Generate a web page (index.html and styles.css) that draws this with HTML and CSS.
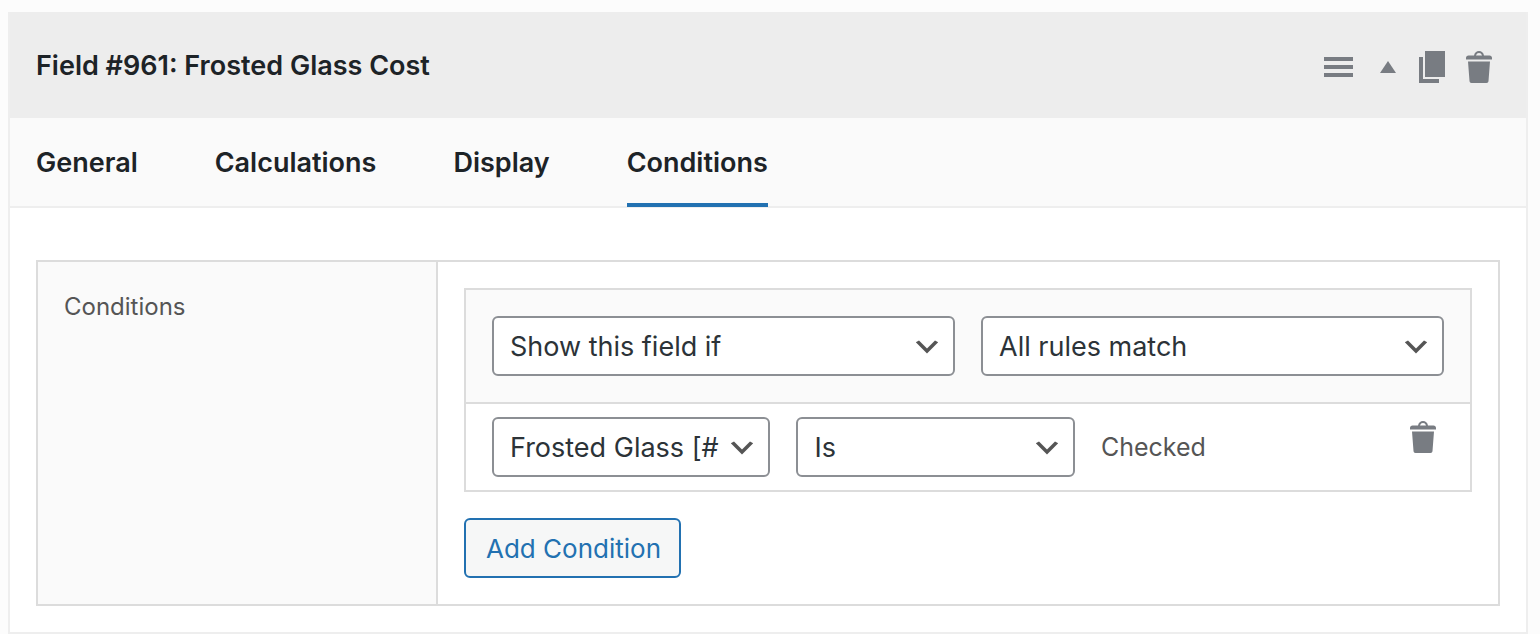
FILE: index.html
```
<!DOCTYPE html>
<html lang="en">

<head>
    <meta charset="UTF-8">
    <title>Field #961: Frosted Glass Cost</title>
    <link rel="stylesheet" href="styles.css">
</head>

<body>
    <div class="field">
        <div class="field-header">
            <h2 class="field-title">Field #961: Frosted Glass Cost</h2>
            <div class="field-actions">
                <button type="button" class="icon-btn" aria-label="Reorder">
                    <svg width="35" height="32" viewBox="0 0 35 32"><path d="M0 6h29v4H0zM0 14h29v4H0zM0 22h29v4H0z"/></svg>
                </button>
                <button type="button" class="icon-btn" aria-label="Collapse">
                    <svg width="16" height="32" viewBox="0 0 16 32"><path d="M8 10l8 12H0z"/></svg>
                </button>
                <button type="button" class="icon-btn" aria-label="Duplicate">
                    <svg width="28" height="32" viewBox="0 0 28 32"><path d="M8 0h20v26H8zM2 6h4v22h16v4H2z"/></svg>
                </button>
                <button type="button" class="icon-btn" aria-label="Delete field">
                    <svg width="26" height="32" viewBox="0 0 26 32"><path d="M8 4.500C8.500 1.500 10.500 0 13 0s4.500 1.500 5 4.500h5.500C25 4.500 26 5.500 26 7v1.500H0V7c0-1.500 1-2.500 2.500-2.500zM10 4.500h6C15.500 2.800 14.500 2 13 2s-2.500.8-3 2.500zM2 10.500h22l-1.500 19.500c-.1 1.300-.8 2-2 2h-15c-1.200 0-1.900-.7-2-2z"/></svg>
                </button>
            </div>
        </div>

        <nav class="tabs">
            <a href="#general" class="tab">General</a>
            <a href="#calculations" class="tab">Calculations</a>
            <a href="#display" class="tab">Display</a>
            <a href="#conditions" class="tab active">Conditions</a>
        </nav>

        <div class="field-body" id="conditions">
            <div class="setting">
                <div class="setting-label">Conditions</div>
                <div class="setting-content">
                    <div class="rules">
                        <div class="rules-header">
                            <select class="select" aria-label="Action">
                                <option>Show this field if</option>
                                <option>Hide this field if</option>
                            </select>
                            <select class="select" aria-label="Match">
                                <option>All rules match</option>
                                <option>Any rule matches</option>
                            </select>
                        </div>
                        <div class="rule">
                            <select class="select" aria-label="Field">
                                <option>Frosted Glass [#960]</option>
                            </select>
                            <select class="select" aria-label="Operator">
                                <option>Is</option>
                                <option>Is not</option>
                            </select>
                            <span class="rule-value">Checked</span>
                            <button type="button" class="icon-btn rule-delete" aria-label="Delete rule">
                                <svg width="26" height="32" viewBox="0 0 26 32"><path d="M8 4.500C8.500 1.500 10.500 0 13 0s4.500 1.500 5 4.500h5.500C25 4.500 26 5.500 26 7v1.500H0V7c0-1.500 1-2.500 2.500-2.500zM10 4.500h6C15.500 2.800 14.500 2 13 2s-2.500.8-3 2.500zM2 10.500h22l-1.500 19.500c-.1 1.300-.8 2-2 2h-15c-1.200 0-1.900-.7-2-2z"/></svg>
                            </button>
                        </div>
                    </div>
                    <button type="button" class="add-btn">Add Condition</button>
                </div>
            </div>
        </div>
    </div>
</body>

</html>
```
FILE: styles.css
```
* {
    box-sizing: border-box;
}

body {
    margin: 0;
    padding: 12px 12px 0 8px;
    background: #fcfcfc;
    font-family: Inter, "Liberation Sans", sans-serif;
    font-size: 26px;
    line-height: 36px;
    color: #1d2327;
}

.field {
    border: 2px solid #eee;
    border-top: 0;
    background: #fff;
}

.field-header {
    display: flex;
    justify-content: space-between;
    align-items: center;
    padding: 36px 34px 34px 26px;
    background: #ededed;
}

.field-title {
    margin: 0;
    font-size: 27px;
    font-weight: 600;
}

.field-actions {
    display: flex;
    align-items: center;
    gap: 21px;
}

.icon-btn {
    padding: 2px 0 0;
    border: 0;
    background: none;
    cursor: pointer;
}

.icon-btn svg {
    display: block;
    fill: #787c82;
}

.tabs {
    display: flex;
    gap: 77px;
    padding: 0 26px;
    border-bottom: 2px solid #eee;
    background: #fafafa;
}

.tab {
    margin-bottom: -1px;
    padding: 27px 0 22px;
    border-bottom: 4px solid transparent;
    font-size: 27px;
    font-weight: 600;
    color: #1d2327;
    text-decoration: none;
}

.tab.active {
    border-bottom-color: #2271b1;
}

.field-body {
    padding: 52px 26px 26px;
}

.setting {
    display: flex;
    border: 2px solid #dcdcdc;
}

.setting-label {
    flex: 0 0 400px;
    padding: 27px 26px;
    border-right: 2px solid #dcdcdc;
    background: #fafafa;
    font-size: 24px;
    color: #555;
}

.setting-content {
    flex: 1;
    min-width: 0;
    padding: 26px;
}

.rules {
    margin-bottom: 26px;
    border: 2px solid #dcdcdc;
}

.rules-header {
    display: grid;
    grid-template-columns: 1fr 1fr;
    gap: 26px;
    padding: 26px;
    border-bottom: 2px solid #dcdcdc;
    background: #fafafa;
}

.rule {
    display: grid;
    grid-template-columns: 29.5% 29.5% 1fr auto;
    gap: 26px;
    padding: 13px 34px 13px 26px;
}

.select {
    width: 100%;
    height: 60px;
    padding: 2px 48px 0 16px;
    border: 2px solid #8c8f94;
    border-radius: 6px;
    appearance: none;
    background: #fff url("data:image/svg+xml,%3Csvg xmlns='http://www.w3.org/2000/svg' viewBox='0 0 20 20'%3E%3Cpath d='M5 6l5 5 5-5 2 1-7 7-7-7 2-1z' fill='%23555'/%3E%3C/svg%3E") no-repeat right 10px top 13px;
    background-size: 32px 32px;
    font: inherit;
    font-size: 27px;
    color: #2c3338;
}

.rule-value {
    align-self: center;
    font-size: 25px;
    color: #555;
}

.rule-delete {
    align-self: start;
    padding-top: 4px;
}

.add-btn {
    height: 60px;
    padding: 2px 18px 0 20px;
    border: 2px solid #2271b1;
    border-radius: 6px;
    background: #f6f7f7;
    font: inherit;
    color: #2271b1;
    cursor: pointer;
}
```
